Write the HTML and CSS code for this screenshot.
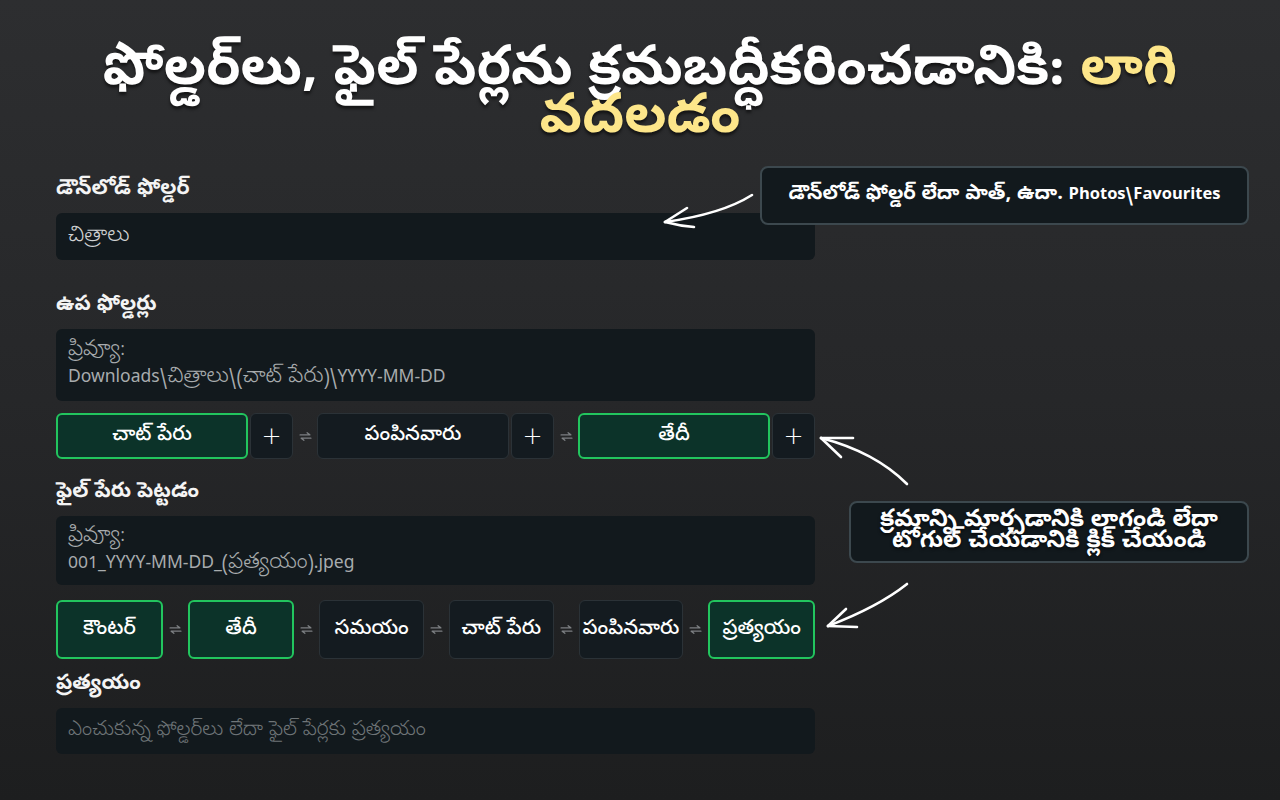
FILE: index.html
```html
<!DOCTYPE html>
<html lang="te">
<head>
<meta charset="utf-8">
<title>ఫోల్డర్‌లు</title>
<link rel="stylesheet" href="styles.css">
</head>
<body>
<div class="page">
  <h1 class="title">ఫోల్డర్‌లు, ఫైల్ పేర్లను క్రమబద్ధీకరించడానికి: <span class="hl">లాగి<br>వదలడం</span></h1>

  <div class="form">
    <div class="label l1">డౌన్‌లోడ్ ఫోల్డర్</div>
    <div class="field f1">చిత్రాలు</div>

    <div class="label l2">ఉప ఫోల్డర్లు</div>
    <div class="field preview p1">ప్రివ్యూ:<br><span class="lat">Downloads\</span>చిత్రాలు<span class="lat">\(</span>చాట్ పేరు<span class="lat">)\YYYY-MM-DD</span></div>

    <div class="chips row1">
      <div class="grp"><div class="chip on">చాట్ పేరు</div><div class="plus">+</div></div>
      <div class="sep"><svg viewBox="0 0 12 12" width="13" height="13"><path d="M1 4.5h9M7.5 2.5l2.5 2M11 7.5H2M4.5 9.5L2 7.5" fill="none" stroke="#7c7f82" stroke-width="1.2" stroke-linecap="round"/></svg></div>
      <div class="grp"><div class="chip">పంపినవారు</div><div class="plus">+</div></div>
      <div class="sep"><svg viewBox="0 0 12 12" width="13" height="13"><path d="M1 4.5h9M7.5 2.5l2.5 2M11 7.5H2M4.5 9.5L2 7.5" fill="none" stroke="#7c7f82" stroke-width="1.2" stroke-linecap="round"/></svg></div>
      <div class="grp"><div class="chip on">తేదీ</div><div class="plus">+</div></div>
    </div>

    <div class="label l3">ఫైల్ పేరు పెట్టడం</div>
    <div class="field preview p2">ప్రివ్యూ:<br><span class="lat">001_YYYY-MM-DD_(</span>ప్రత్యయం<span class="lat">).jpeg</span></div>

    <div class="chips row2">
      <div class="chip on">కౌంటర్</div>
      <div class="sep"><svg viewBox="0 0 12 12" width="13" height="13"><path d="M1 4.5h9M7.5 2.5l2.5 2M11 7.5H2M4.5 9.5L2 7.5" fill="none" stroke="#7c7f82" stroke-width="1.2" stroke-linecap="round"/></svg></div>
      <div class="chip on">తేదీ</div>
      <div class="sep"><svg viewBox="0 0 12 12" width="13" height="13"><path d="M1 4.5h9M7.5 2.5l2.5 2M11 7.5H2M4.5 9.5L2 7.5" fill="none" stroke="#7c7f82" stroke-width="1.2" stroke-linecap="round"/></svg></div>
      <div class="chip">సమయం</div>
      <div class="sep"><svg viewBox="0 0 12 12" width="13" height="13"><path d="M1 4.5h9M7.5 2.5l2.5 2M11 7.5H2M4.5 9.5L2 7.5" fill="none" stroke="#7c7f82" stroke-width="1.2" stroke-linecap="round"/></svg></div>
      <div class="chip">చాట్ పేరు</div>
      <div class="sep"><svg viewBox="0 0 12 12" width="13" height="13"><path d="M1 4.5h9M7.5 2.5l2.5 2M11 7.5H2M4.5 9.5L2 7.5" fill="none" stroke="#7c7f82" stroke-width="1.2" stroke-linecap="round"/></svg></div>
      <div class="chip">పంపినవారు</div>
      <div class="sep"><svg viewBox="0 0 12 12" width="13" height="13"><path d="M1 4.5h9M7.5 2.5l2.5 2M11 7.5H2M4.5 9.5L2 7.5" fill="none" stroke="#7c7f82" stroke-width="1.2" stroke-linecap="round"/></svg></div>
      <div class="chip on">ప్రత్యయం</div>
    </div>

    <div class="label l4">ప్రత్యయం</div>
    <div class="field placeholder f2">ఎంచుకున్న ఫోల్డర్‌లు లేదా ఫైల్ పేర్లకు ప్రత్యయం</div>
  </div>

  <div class="tip tip1">డౌన్‌లోడ్ ఫోల్డర్ లేదా పాత్, ఉదా.&nbsp;<span class="lat">Photos\Favourites</span></div>
  <div class="tip tip2">క్రమాన్ని మార్చడానికి లాగండి లేదా<br>టోగుల్ చేయడానికి క్లిక్ చేయండి</div>

  <svg class="arrows" width="1280" height="800" viewBox="0 0 1280 800">
    <g fill="none" stroke="#ffffff" stroke-width="2.6" stroke-linecap="round" stroke-linejoin="round">
      <path d="M752 195 Q722 214 665 222"/>
      <path d="M665 222 L687 208"/>
      <path d="M665 222 Q680 226 694 227"/>
      <path d="M907 484 Q875 452 821 438"/>
      <path d="M821 438 L853 438"/>
      <path d="M821 438 L841 457"/>
      <path d="M907 584 Q878 607 828 626"/>
      <path d="M828 626 L857 627"/>
      <path d="M828 626 L846 609"/>
    </g>
  </svg>
</div>
</body>
</html>
```
FILE: styles.css
```css
html, body {
  margin: 0;
  padding: 0;
}
body {
  width: 1280px;
  height: 800px;
  overflow: hidden;
  background: linear-gradient(180deg, #2d2e30 0%, #262729 50%, #1d1e1f 100%);
  font-family: "Noto Sans Telugu", "Noto Sans", "DejaVu Sans", sans-serif;
  color: #ffffff;
}
.page {
  position: relative;
  width: 1280px;
  height: 800px;
}
.title {
  margin: 0;
  padding: 50px 40px 0;
  text-align: center;
  font-size: 55px;
  line-height: 48px;
  font-weight: 700;
  color: #ffffff;
  text-shadow: 0 3px 3px rgba(0,0,0,0.55);
}
.hl {
  color: #fde68a;
}
.form {
  width: 759px;
  margin: 31px 0 0 56px;
}
.label {
  font-size: 21px;
  font-weight: 700;
  line-height: 26px;
  height: 26px;
  margin: 0 0 10px;
  color: #f4f4f4;
}
.l2 { margin-top: 33px; }
.l3 { margin-top: 21px; }
.l4 { margin-top: 13px; }
.field {
  box-sizing: border-box;
  background: #12191d;
  border-radius: 6px;
  padding: 0 12px;
  font-size: 22px;
  font-weight: 300;
  color: #d0d2d3;
  display: flex;
  align-items: center;
}
.f1 { height: 47px; }
.f2 { height: 46px; font-size: 20.5px; }
.preview {
  display: block;
  color: #a8acae;
  line-height: 27px;
  padding: 9px 12px;
}
.p1 { height: 72px; margin-bottom: 12px; }
.p2 { height: 69px; margin-bottom: 15px; padding-top: 8px; }
.lat {
  font-size: 17.5px;
  font-weight: 400;
}
.placeholder {
  color: #6f7578;
}
.chips {
  display: flex;
  align-items: stretch;
}
.row1 {
  height: 46px;
}
.row2 {
  height: 59px;
}
.grp {
  flex: 1;
  display: flex;
  gap: 2px;
}
.grp .chip {
  flex: 1;
}
.row2 .chip {
  flex: 1;
}
.chip {
  display: flex;
  align-items: center;
  justify-content: center;
  background: #141b20;
  border: 1px solid #2b3237;
  border-radius: 6px;
  font-size: 20.5px;
  font-weight: 500;
  color: #ffffff;
  box-sizing: border-box;
}
.chip.on {
  background: #0c3329;
  border: 2px solid #22c55e;
}
.plus {
  width: 43px;
  display: flex;
  align-items: center;
  justify-content: center;
  background: #141b20;
  border: 1px solid #2b3237;
  border-radius: 6px;
  font-size: 24px;
  font-weight: 300;
  color: #ffffff;
  box-sizing: border-box;
  font-family: "DejaVu Sans", sans-serif;
}
.sep {
  width: 24px;
  flex: none;
  display: flex;
  align-items: center;
  justify-content: center;
}
.row2 .sep {
  width: 25px;
}
.tip {
  position: absolute;
  box-sizing: border-box;
  background: #12191d;
  border: 2px solid #3c484e;
  border-radius: 8px;
  color: #ffffff;
  font-weight: 700;
  display: flex;
  align-items: center;
  justify-content: center;
  text-align: center;
}
.tip1 {
  left: 760px;
  top: 166px;
  width: 489px;
  height: 59px;
  font-size: 20px;
}
.tip1 .lat {
  font-size: 16.5px;
  font-weight: 700;
}
.tip2 {
  left: 849px;
  top: 501px;
  width: 400px;
  height: 62px;
  font-size: 24px;
  line-height: 21px;
  text-shadow: 0 2px 3px rgba(0,0,0,0.6);
}
.arrows {
  position: absolute;
  left: 0;
  top: 0;
  pointer-events: none;
}
```
